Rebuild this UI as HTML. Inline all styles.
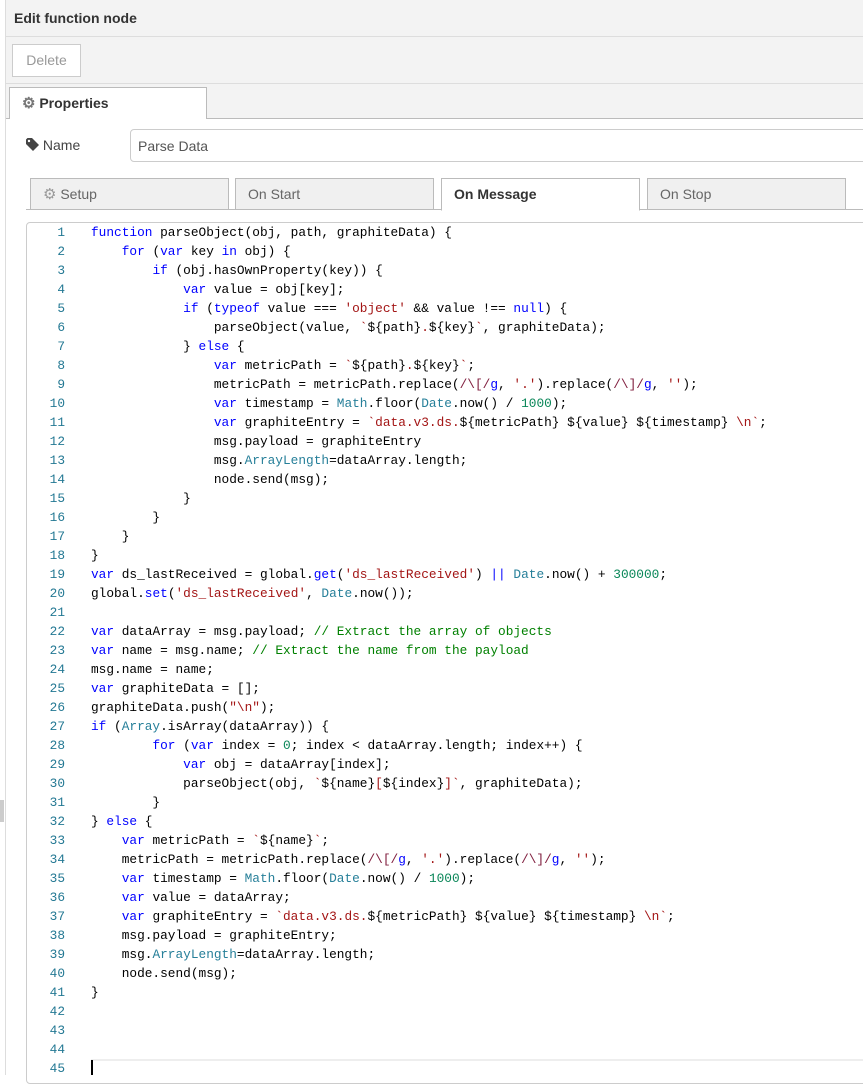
<!DOCTYPE html>
<html><head><meta charset="utf-8"><style>
body{margin:0;width:863px;height:1075px;overflow:hidden;background:#fff;font-family:"Liberation Sans",sans-serif;position:relative}
.lb{position:absolute;left:5px;top:0;width:1px;height:1075px;background:#ddd}
.sb{position:absolute;left:0;top:800px;width:4px;height:22px;background:#ccc}
.hdr{position:absolute;left:6px;top:0;right:0;height:36px;background:#f3f3f3;border-bottom:1px solid #ddd;font-weight:bold;font-size:14px;color:#333;line-height:36px;padding-left:8px}
.tb{position:absolute;left:6px;top:37px;right:0;height:46px;background:#f3f3f3;border-bottom:1px solid #ddd}
.btn{position:absolute;left:6px;top:7px;width:67px;height:31px;border:1px solid #ccc;background:#fff;color:#999;font-size:14px;line-height:31px;text-align:center}
.ptabs{position:absolute;left:6px;top:84px;right:0;height:34px;background:#f3f3f3;border-bottom:1px solid #bbb}
.ptab{position:absolute;left:3px;top:3px;width:198px;height:32px;background:#fff;border:1px solid #bbb;border-bottom:none;font-weight:bold;font-size:14px;color:#333;line-height:30px;padding-left:12px;box-sizing:border-box}
.lbl{position:absolute;left:26px;top:137px;font-size:14px;color:#444}
.inp{position:absolute;left:130px;top:129px;width:740px;height:33px;border:1px solid #ccc;border-radius:4px;font-size:14px;color:#555;line-height:33px;padding-left:7px;box-sizing:border-box}
.st{position:absolute;top:178px;height:32px;width:199px;box-sizing:border-box;border:1px solid #bbb;background:#f0f0f0;font-size:14px;color:#666;line-height:30px;padding-left:12px}
.stline{position:absolute;left:26px;right:0;top:209px;height:1px;background:#bbb}
.ed{position:absolute;left:26px;top:222px;width:850px;height:860px;border:1px solid #ccc;border-radius:4px}
.code{position:absolute;left:0;top:223px;font-family:"Liberation Mono",monospace;font-size:12.8px;line-height:19px;white-space:pre;color:#000}
.ln{display:inline-block;width:65px;text-align:right;color:#237893;margin-right:26px}
.k{color:#0000ff}.s{color:#a31515}.r{color:#811f3f}.n{color:#098658}.t{color:#267f99}.c{color:#008000}
.cur{position:absolute;left:91px;top:1059px;right:0;height:19px;border-top:2px solid #eee}
.caret{position:absolute;left:91px;top:1060px;width:2px;height:15px;background:#000}
.g{color:#888;font-size:15px}
</style></head><body>
<div class="lb"></div><div class="sb"></div>
<div class="hdr">Edit function node</div>
<div class="tb"><div class="btn">Delete</div></div>
<div class="ptabs"><div class="ptab"><span class="g" style="color:#777">⚙</span> Properties</div></div>
<div class="lbl"><svg width="13" height="13" viewBox="0 0 13 13" style="vertical-align:-1px"><path d="M0 1.5V6l7 7 6-6-7-7H1.5z" fill="#444"/><circle cx="3" cy="3" r="1.2" fill="#fff"/></svg> Name</div>
<div class="inp">Parse Data</div>
<div class="st" style="left:30px"><span class="g" style="color:#999">⚙</span> Setup</div>
<div class="st" style="left:235px">On Start</div>
<div class="st" style="left:441px;background:#fff;color:#333;font-weight:bold;border-bottom:1px solid #fff;height:33px">On Message</div>
<div class="st" style="left:647px">On Stop</div>
<div class="stline" style="z-index:-1"></div>
<div class="ed"></div>
<div class="cur"></div>
<div class="code"><span class="ln">1</span><span class="k">function</span> parseObject(obj, path, graphiteData) {
<span class="ln">2</span>    <span class="k">for</span> (<span class="k">var</span> key <span class="k">in</span> obj) {
<span class="ln">3</span>        <span class="k">if</span> (obj.hasOwnProperty(key)) {
<span class="ln">4</span>            <span class="k">var</span> value = obj[key];
<span class="ln">5</span>            <span class="k">if</span> (<span class="k">typeof</span> value === <span class="s">'object'</span> &amp;&amp; value !== <span class="k">null</span>) {
<span class="ln">6</span>                parseObject(value, <span class="s">`</span>${path}<span class="s">.</span>${key}<span class="s">`</span>, graphiteData);
<span class="ln">7</span>            } <span class="k">else</span> {
<span class="ln">8</span>                <span class="k">var</span> metricPath = <span class="s">`</span>${path}<span class="s">.</span>${key}<span class="s">`</span>;
<span class="ln">9</span>                metricPath = metricPath.replace(<span class="r">/\[/</span><span class="k">g</span>, <span class="s">'.'</span>).replace(<span class="r">/\]/</span><span class="k">g</span>, <span class="s">''</span>);
<span class="ln">10</span>                <span class="k">var</span> timestamp = <span class="t">Math</span>.floor(<span class="t">Date</span>.now() / <span class="n">1000</span>);
<span class="ln">11</span>                <span class="k">var</span> graphiteEntry = <span class="s">`data.v3.ds.</span>${metricPath}<span class="s"> </span>${value}<span class="s"> </span>${timestamp}<span class="s"> \n`</span>;
<span class="ln">12</span>                msg.payload = graphiteEntry
<span class="ln">13</span>                msg.<span class="t">ArrayLength</span>=dataArray.length;
<span class="ln">14</span>                node.send(msg);
<span class="ln">15</span>            }
<span class="ln">16</span>        }
<span class="ln">17</span>    }
<span class="ln">18</span>}
<span class="ln">19</span><span class="k">var</span> ds_lastReceived = global.<span class="k">get</span>(<span class="s">'ds_lastReceived'</span>) <span class="k">||</span> <span class="t">Date</span>.now() + <span class="n">300000</span>;
<span class="ln">20</span>global.<span class="k">set</span>(<span class="s">'ds_lastReceived'</span>, <span class="t">Date</span>.now());
<span class="ln">21</span>
<span class="ln">22</span><span class="k">var</span> dataArray = msg.payload; <span class="c">// Extract the array of objects</span>
<span class="ln">23</span><span class="k">var</span> name = msg.name; <span class="c">// Extract the name from the payload</span>
<span class="ln">24</span>msg.name = name;
<span class="ln">25</span><span class="k">var</span> graphiteData = [];
<span class="ln">26</span>graphiteData.push(<span class="s">"\n"</span>);
<span class="ln">27</span><span class="k">if</span> (<span class="t">Array</span>.isArray(dataArray)) {
<span class="ln">28</span>        <span class="k">for</span> (<span class="k">var</span> index = <span class="n">0</span>; index &lt; dataArray.length; index++) {
<span class="ln">29</span>            <span class="k">var</span> obj = dataArray[index];
<span class="ln">30</span>            parseObject(obj, <span class="s">`</span>${name}<span class="s">[</span>${index}<span class="s">]`</span>, graphiteData);
<span class="ln">31</span>        }
<span class="ln">32</span>} <span class="k">else</span> {
<span class="ln">33</span>    <span class="k">var</span> metricPath = <span class="s">`</span>${name}<span class="s">`</span>;
<span class="ln">34</span>    metricPath = metricPath.replace(<span class="r">/\[/</span><span class="k">g</span>, <span class="s">'.'</span>).replace(<span class="r">/\]/</span><span class="k">g</span>, <span class="s">''</span>);
<span class="ln">35</span>    <span class="k">var</span> timestamp = <span class="t">Math</span>.floor(<span class="t">Date</span>.now() / <span class="n">1000</span>);
<span class="ln">36</span>    <span class="k">var</span> value = dataArray;
<span class="ln">37</span>    <span class="k">var</span> graphiteEntry = <span class="s">`data.v3.ds.</span>${metricPath}<span class="s"> </span>${value}<span class="s"> </span>${timestamp}<span class="s"> \n`</span>;
<span class="ln">38</span>    msg.payload = graphiteEntry;
<span class="ln">39</span>    msg.<span class="t">ArrayLength</span>=dataArray.length;
<span class="ln">40</span>    node.send(msg);
<span class="ln">41</span>}
<span class="ln">42</span>
<span class="ln">43</span>
<span class="ln">44</span>
<span class="ln">45</span></div>
<div class="caret"></div>
</body></html>
